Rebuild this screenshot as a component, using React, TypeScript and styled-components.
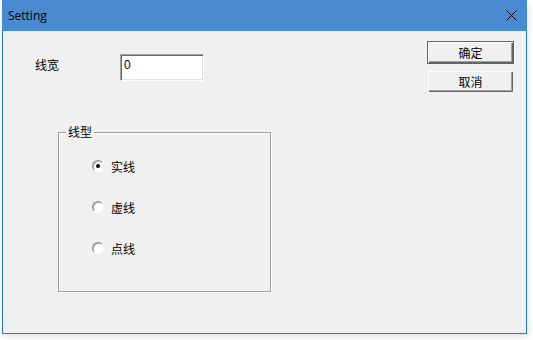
import React from "react";
import styled, { createGlobalStyle } from "styled-components";

const Global = createGlobalStyle`
  html, body { margin: 0; padding: 0; background: #ffffff; }
  body { font-family: "Noto Sans CJK SC", "Noto Sans", sans-serif; }
`;

const Page = styled.div`
  width: 533px;
  height: 340px;
  padding-left: 2px;
  box-sizing: border-box;
`;

const Window = styled.div`
  width: 525px;
  height: 334px;
  box-sizing: border-box;
  border: 1px solid #2b79d6;
  border-top: none;
  background: #f0f0f0;
  display: flex;
  flex-direction: column;
  box-shadow: 1px 3px 6px rgba(0, 0, 0, 0.12);
`;

const TitleBar = styled.div`
  height: 31px;
  margin: 0 -1px;
  background: #4a8ad1;
  display: flex;
  align-items: center;
  justify-content: space-between;
  padding: 0 10px 0 6px;
  flex: none;
`;

const Title = styled.span`
  font-family: "Open Sans", "Noto Sans", sans-serif;
  font-size: 12px;
  color: #000;
  margin-top: -1px;
`;

const CloseIcon = styled.svg`
  width: 11px;
  height: 11px;
  display: block;
`;

const Body = styled.div`
  flex: 1;
  display: flex;
  justify-content: space-between;
  padding: 10px 12px 0 32px;
`;

const LeftCol = styled.div`
  display: flex;
  flex-direction: column;
`;

const Row = styled.div`
  display: flex;
  align-items: center;
  margin-top: 13px;
`;

const Label = styled.span`
  width: 85px;
  font-size: 12px;
  color: #000;
  line-height: 14px;
  margin-top: -5px;
`;

const Input = styled.div`
  width: 84px;
  height: 27px;
  box-sizing: border-box;
  background: #fff;
  border-style: solid;
  border-width: 1px;
  border-color: #a0a0a0 #ffffff #ffffff #a0a0a0;
  box-shadow: inset 1px 1px 0 #696969, inset -1px -1px 0 #e3e3e3;
  font-family: "Liberation Sans", sans-serif;
  font-size: 12px;
  padding: 3px 0 0 3px;
  color: #000;
`;

const Group = styled.fieldset`
  margin: 44px 0 0 23px;
  width: 213px;
  height: 167px;
  box-sizing: border-box;
  border: 1px solid #a0a0a0;
  box-shadow: 1px 1px 0 #ffffff, inset 1px 1px 0 #ffffff;
  padding: 0;
`;

const Legend = styled.legend`
  font-size: 12px;
  padding: 0 2px;
  margin-left: 7px;
  color: #000;
  line-height: 14px;
`;

const RadioList = styled.div`
  display: flex;
  flex-direction: column;
  gap: 25px;
  padding: 19px 0 0 33px;
`;

const RadioRow = styled.label`
  display: flex;
  align-items: center;
  gap: 7px;
  font-size: 12px;
  height: 16px;
  color: #000;
`;

const RadioDot = styled.span<{ $checked?: boolean }>`
  width: 12px;
  height: 12px;
  box-sizing: border-box;
  border-radius: 50%;
  border: 1px solid;
  border-color: #8a8a8a #f4f4f4 #ffffff #8a8a8a;
  background: #ffffff;
  box-shadow: inset 1px 1px 0 #b4b4b4;
  display: flex;
  align-items: center;
  justify-content: center;
  flex: none;
  &::after {
    content: "";
    width: 4px;
    height: 4px;
    border-radius: 50%;
    background: #000;
    display: ${(p) => (p.$checked ? "block" : "none")};
  }
`;

const RightCol = styled.div`
  display: flex;
  flex-direction: column;
  gap: 6px;
`;

const Button = styled.div<{ $default?: boolean }>`
  width: 87px;
  height: 23px;
  box-sizing: border-box;
  display: flex;
  align-items: center;
  justify-content: center;
  font-size: 12px;
  color: #000;
  background: #f0f0f0;
  border: 1px solid ${(p) => (p.$default ? "#646464" : "#f0f0f0")};
  box-shadow: ${(p) =>
    p.$default
      ? "inset 1px 1px 0 #ffffff, inset -1px -1px 0 #646464, inset -2px -2px 0 #a0a0a0"
      : "inset 1px 1px 0 #ffffff, inset -1px -1px 0 #696969, inset -2px -2px 0 #a0a0a0"};
`;

export default function App() {
  return (
    <Page>
      <Global />
      <Window>
        <TitleBar>
          <Title>Setting</Title>
          <CloseIcon viewBox="0 0 11 11">
            <path d="M0.5 0.5 L10.5 10.5 M10.5 0.5 L0.5 10.5" stroke="#000" strokeWidth="1" fill="none" />
          </CloseIcon>
        </TitleBar>
        <Body>
          <LeftCol>
            <Row>
              <Label>线宽</Label>
              <Input>0</Input>
            </Row>
            <Group>
              <Legend>线型</Legend>
              <RadioList>
                <RadioRow>
                  <RadioDot $checked />
                  实线
                </RadioRow>
                <RadioRow>
                  <RadioDot />
                  虚线
                </RadioRow>
                <RadioRow>
                  <RadioDot />
                  点线
                </RadioRow>
              </RadioList>
            </Group>
          </LeftCol>
          <RightCol>
            <Button $default>确定</Button>
            <Button>取消</Button>
          </RightCol>
        </Body>
      </Window>
    </Page>
  );
}
